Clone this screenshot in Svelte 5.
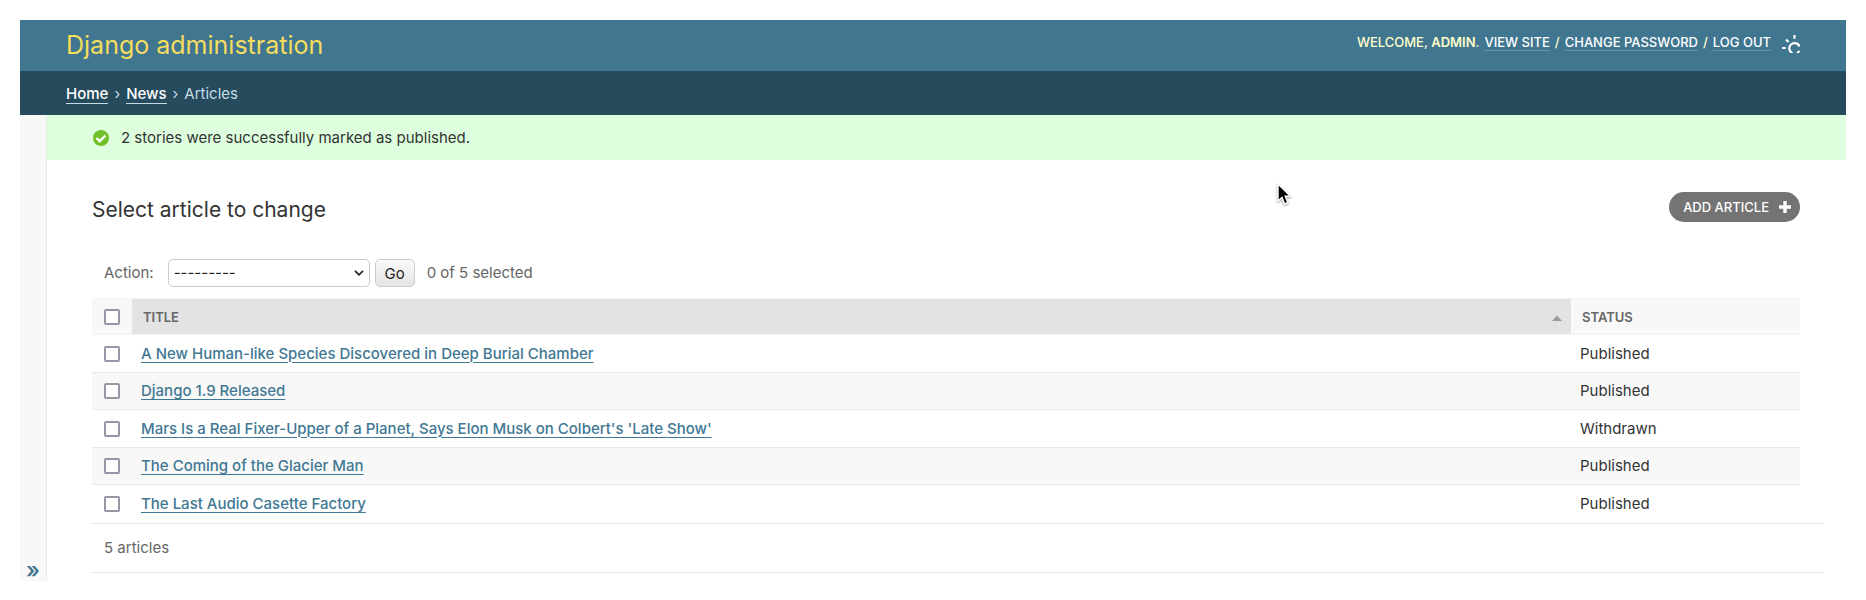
<script>
  const articles = [
    { title: 'A New Human-like Species Discovered in Deep Burial Chamber', status: 'Published' },
    { title: 'Django 1.9 Released', status: 'Published' },
    { title: "Mars Is a Real Fixer-Upper of a Planet, Says Elon Musk on Colbert's 'Late Show'", status: 'Withdrawn' },
    { title: 'The Coming of the Glacier Man', status: 'Published' },
    { title: 'The Last Audio Casette Factory', status: 'Published' }
  ];
</script>

<div class="container">
  <header>
    <h1>Django administration</h1>
    <div class="tools">
      <span>WELCOME, <strong>ADMIN</strong>.</span>
      <a href="#site">VIEW SITE</a><span>/</span>
      <a href="#password">CHANGE PASSWORD</a><span>/</span>
      <a href="#logout">LOG OUT</a>
      <button class="theme" aria-label="Toggle theme">
        <svg width="18" height="18" viewBox="0 0 18 18" fill="none" stroke="#fff" stroke-width="2.2">
          <path d="M10.500 18.200A5.300 5.300 0 1 1 17.600 11.500M15 18l2.600-2M12.500 0v3.800M4 4.500l2.500 2.500M0 13h3.800" />
        </svg>
      </button>
    </div>
  </header>

  <nav class="crumbs">
    <a href="#home">Home</a><span>›</span><a href="#news">News</a><span>›</span><span>Articles</span>
  </nav>

  <div class="main">
    <aside>
      <button class="toggle" aria-label="Toggle navigation">»</button>
    </aside>
    <div class="content">
      <p class="message">
        <svg width="16" height="16" viewBox="0 0 16 16">
          <circle cx="8" cy="8" r="8" fill="#70bf2b" />
          <path d="M3.5 8l3.2 3.2 5.8-5.7" fill="none" stroke="#fff" stroke-width="2.4" />
        </svg>
        2 stories were successfully marked as published.
      </p>

      <main>
        <div class="heading">
          <h2>Select article to change</h2>
          <a class="add" href="#add">ADD ARTICLE
            <svg width="12" height="12" viewBox="0 0 12 12"><path d="M6 0v12M0 6h12" stroke="#fff" stroke-width="3.4" /></svg>
          </a>
        </div>

        <div class="actions">
          <label for="action">Action:</label>
          <span class="picker">
            <select id="action"><option>---------</option></select>
            <svg width="10" height="6" viewBox="0 0 10 6"><path d="M1 .8l4 4 4-4" fill="none" stroke="#222" stroke-width="1.7" /></svg>
          </span>
          <button class="go">Go</button>
          <span class="count">0 of 5 selected</span>
        </div>

        <table>
          <thead>
            <tr>
              <th class="check"><input type="checkbox" aria-label="Select all articles" /></th>
              <th class="sorted"><div>TITLE <svg width="10" height="8" viewBox="0 0 10 8"><path d="M0 8l5-5.500L10 8z" fill="#999" /></svg></div></th>
              <th class="status">STATUS</th>
            </tr>
          </thead>
          <tbody>
            {#each articles as article}
              <tr>
                <td class="check"><input type="checkbox" aria-label={article.title} /></td>
                <td><a href="#article">{article.title}</a></td>
                <td>{article.status}</td>
              </tr>
            {/each}
          </tbody>
        </table>
        <p class="paginator">5 articles</p>
      </main>
    </div>
  </div>
</div>

<svg class="pointer" width="16" height="24" viewBox="0 0 16 24">
  <path d="M2 1v17l4-3.500 2.600 6.500 3.200-1.400L9.200 13.200H14.500z" fill="#000" stroke="#fff" stroke-width="1.400" />
</svg>

<style>
  :global(body) {
    background: #fff;
    color: #333;
    font-family: Inter, Roboto, sans-serif;
    font-size: 15px;
    line-height: 20px;
  }
  .container { margin: 20px 20px 0; }
  h1, h2, p { margin: 0; font-weight: 400; }
  header {
    display: flex;
    justify-content: space-between;
    background: #417690;
    height: 51px;
    padding: 0 46px;
  }
  h1 { color: #f5dd5d; font-size: 25px; line-height: 50px; }
  .tools {
    display: flex;
    align-items: center;
    gap: 5px;
    height: 44px;
    color: #ffc;
    font-size: 13px;
    font-weight: 500;
    line-height: 16px;
  }
  .tools strong { font-weight: 600; }
  .tools a { color: #fff; text-decoration: none; box-shadow: 0 1px #6791a6; }
  button { font-family: inherit; }
  .theme { display: flex; margin: 4px 0 0 6px; padding: 0; border: 0; background: none; }
  .theme svg { overflow: hidden; }
  .crumbs {
    display: flex;
    align-items: center;
    gap: 6px;
    height: 42px;
    padding: 2px 46px 0;
    background: #264b5d;
    color: #c4dce8;
  }
  .crumbs a { color: #fff; font-weight: 500; line-height: 18px; text-decoration: none; box-shadow: 0 1px #c4dce8; }
  .main { display: flex; }
  aside {
    display: flex;
    flex-direction: column;
    justify-content: flex-end;
    width: 26px;
    flex: none;
    background: #f8f8f8;
    border-right: 1px solid #eaeaea;
  }
  .toggle { padding: 0; border: 0; background: none; color: #417690; font-size: 22px; font-weight: 600; line-height: 22px; }
  .content { flex: 1; min-width: 0; }
  .message {
    display: flex;
    align-items: center;
    gap: 12px;
    height: 45px;
    padding: 0 46px;
    background: #dfd;
  }
  main { padding: 32px 23px 8px 45px; }
  .heading { display: flex; justify-content: space-between; align-items: flex-start; margin-right: 23px; height: 67px; }
  h2 { font-size: 21px; line-height: 36px; }
  .add {
    display: flex;
    align-items: center;
    gap: 10px;
    height: 30px;
    padding: 0 9px 0 14px;
    border-radius: 15px;
    background: #747474;
    color: #fff;
    font-size: 13px;
    font-weight: 500;
    text-decoration: none;
  }
  .actions { display: flex; align-items: center; height: 28px; padding-left: 12px; margin-bottom: 11px; color: #666; }
  .actions label { margin-right: 14px; }
  .picker { display: grid; align-items: center; width: 202px; margin-right: 5px; }
  .picker > * { grid-area: 1 / 1; }
  .picker svg { justify-self: end; margin-right: 6px; pointer-events: none; }
  select {
    appearance: none;
    width: 100%;
    height: 28px;
    padding: 0 5px;
    border: 1px solid #ccc;
    border-radius: 5px;
    background: #fff;
    color: #222;
    font: inherit;
  }
  .go {
    width: 40px;
    height: 28px;
    margin-right: 12px;
    padding: 0;
    border: 1px solid #ccc;
    border-radius: 5px;
    background: linear-gradient(#fafafa, #e4e4e4);
    color: #222;
    font-size: 15px;
  }
  table { width: calc(100% - 23px); border-collapse: collapse; table-layout: fixed; }
  th {
    height: 35px;
    padding: 0 11px;
    background: #f8f8f8;
    border: solid #f4f4f4;
    border-width: 1px 0;
    color: #666;
    font-size: 13px;
    font-weight: 600;
    text-align: left;
  }
  th.check { width: 16px; padding: 0 12px; }
  th.status { width: 207px; }
  th.sorted { padding-right: 9px; background: #e3e3e3; }
  .sorted div { display: flex; justify-content: space-between; align-items: center; }
  td { padding: 0 9px; border-bottom: 1px solid #e8e8e8; }
  td.check { padding: 0 12px; }
  tbody tr { height: 38px; }
  tbody tr:nth-child(even) { height: 37px; background: #f8f8f8; }
  tbody tr:last-child td { border-bottom: 0; }
  td a { color: #417893; font-weight: 500; text-decoration: underline; text-underline-offset: 3px; text-decoration-thickness: 1px; }
  input {
    appearance: none;
    display: block;
    width: 16px;
    height: 16px;
    margin: 0;
    border: 2px solid #9696a6;
    border-radius: 2px;
    background: #fff;
  }
  .paginator { padding: 14px 12px; border: solid #e8e8e8; border-width: 1px 0; color: #666; }
  .pointer { position: absolute; left: 1276px; top: 183px; filter: drop-shadow(0 1px 1px #0006); }
</style>
